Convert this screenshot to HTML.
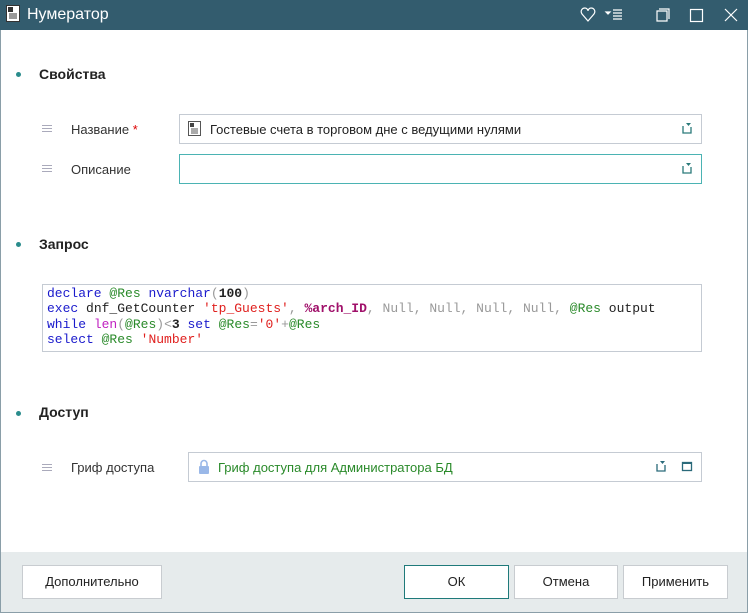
<!DOCTYPE html>
<html><head><meta charset="utf-8"><style>
*{box-sizing:border-box;margin:0;padding:0}
body{width:748px;height:613px;overflow:hidden;background:#fff;font-family:"Liberation Sans",sans-serif;font-size:13px;color:#222;position:relative}
.tb{position:absolute;left:0;top:0;width:748px;height:30px;background:#335c6e;color:#fff}
.win{position:absolute;left:0;top:30px;width:748px;height:583px;border:1px solid #8a9ea8;border-top:none}
.ab{position:absolute}
.sec{position:absolute;left:39px;font-size:14px;font-weight:bold;color:#222}
.dot{position:absolute;left:16px;width:5px;height:5px;border-radius:50%;background:#2a8c8c}
.lbl{position:absolute;left:71px;color:#333}
.hb{position:absolute;left:42px;width:10px;height:7px;border-top:1px solid #aab;border-bottom:1px solid #aab}
.hb:after{content:"";position:absolute;left:0;top:2px;width:10px;border-top:1px solid #aab}
.inp{position:absolute;border:1px solid #c5cbd3;background:#fff}
.code{position:absolute;left:42px;top:284px;width:660px;height:68px;border:1px solid #c5cbd3;font-family:"Liberation Mono",monospace;font-size:13px;line-height:15.3px;padding:1px 0 0 4px;white-space:pre;color:#222}
.k{color:#1a1acc}.v{color:#2a8a2a}.s{color:#e0201e}.g{color:#999}.m{color:#c020c0}.b{font-weight:bold}.p{color:#a0106a;font-weight:bold}
.foot{position:absolute;left:1px;top:552px;width:746px;height:60px;background:#e6ebec}
.btn{position:absolute;top:565px;height:34px;border:1px solid #c8ccd0;background:#fff;text-align:center;line-height:32px;color:#222}
</style></head><body>
<div class="tb">
<svg class="ab" style="left:6px;top:5px" width="14" height="17"><rect x="0.5" y="0.5" width="13" height="16" fill="#fff" stroke="#333"/><rect x="2" y="2" width="5" height="5" fill="#333"/><path d="M3 9h8M3 11h8M3 13h8" stroke="#333"/></svg>
<div class="ab" style="left:27px;top:6px;font-size:16px">Нумератор</div>
<svg class="ab" style="left:580px;top:6px" width="160" height="18" fill="none" stroke="#fff" stroke-width="1.2">
<path d="M8 15 L2 8 C0 5 2 2 5 2 C7 2 8 4 8 5 C8 4 9 2 11 2 C14 2 16 5 14 8 Z"/>
<path d="M26 6h4l-2 2z" fill="#fff"/><path d="M33 4h9M33 7h9M33 10h9M33 13h9"/>
<path d="M79 3h10v10M77 5h10v10h-10z"/>
<rect x="110.5" y="3.5" width="12" height="12"/>
<path d="M145 3l12 12M157 3l-12 12"/></svg>
</div>
<div class="win"></div>
<div class="dot" style="top:72px"></div><div class="sec" style="top:66px">Свойства</div>
<div class="hb" style="top:125px"></div><div class="lbl" style="top:122px">Название <span style="color:#d00">*</span></div>
<div class="inp" style="left:179px;top:114px;width:523px;height:30px"></div>
<svg class="ab" style="left:188px;top:121px" width="13" height="15"><rect x="0.5" y="0.5" width="12" height="14" fill="#fff" stroke="#555"/><rect x="2" y="2" width="4" height="4" fill="#444"/><path d="M3 8h7M3 10h7M3 12h7" stroke="#555"/></svg>
<div class="ab" style="left:210px;top:122px;color:#222">Гостевые счета в торговом дне с ведущими нулями</div>
<svg class="ab" style="left:681px;top:122px" width="12" height="12" fill="none" stroke="#2a7a7a" stroke-width="1.3"><path d="M2 4v7h8V5"/><path d="M5 1h5l-2.5 3z" fill="#2a7a7a" stroke="none"/></svg>
<div class="hb" style="top:165px"></div><div class="lbl" style="top:162px">Описание</div>
<div class="inp" style="left:179px;top:154px;width:523px;height:30px;border-color:#4bb3b3"></div>
<svg class="ab" style="left:681px;top:162px" width="12" height="12" fill="none" stroke="#2a7a7a" stroke-width="1.3"><path d="M2 4v7h8V5"/><path d="M5 1h5l-2.5 3z" fill="#2a7a7a" stroke="none"/></svg>
<div class="dot" style="top:242px"></div><div class="sec" style="top:236px">Запрос</div>
<div class="code"><span class="k">declare</span> <span class="v">@Res</span> <span class="k">nvarchar</span><span class="g">(</span><span class="b">100</span><span class="g">)</span>
<span class="k">exec</span> dnf_GetCounter <span class="s">'tp_Guests'</span><span class="g">,</span> <span class="p">%arch_ID</span><span class="g">, Null, Null, Null, Null,</span> <span class="v">@Res</span> output
<span class="k">while</span> <span class="m">len</span><span class="g">(</span><span class="v">@Res</span><span class="g">)&lt;</span><span class="b">3</span> <span class="k">set</span> <span class="v">@Res</span><span class="g">=</span><span class="s">'0'</span><span class="g">+</span><span class="v">@Res</span>
<span class="k">select</span> <span class="v">@Res</span> <span class="s">'Number'</span></div>
<div class="dot" style="top:411px"></div><div class="sec" style="top:404px">Доступ</div>
<div class="hb" style="top:464px"></div><div class="lbl" style="top:460px">Гриф доступа</div>
<div class="inp" style="left:188px;top:452px;width:514px;height:30px"></div>
<svg class="ab" style="left:198px;top:459px" width="12" height="15"><path d="M3 7V4.5a3 3 0 0 1 6 0V7" fill="none" stroke="#9ab8e8" stroke-width="1.6"/><rect x="1" y="7" width="10" height="8" rx="1" fill="#9ab8e8"/></svg>
<div class="ab" style="left:218px;top:460px;color:#2a8a2a">Гриф доступа для Администратора БД</div>
<svg class="ab" style="left:655px;top:460px" width="40" height="12" fill="none" stroke="#2a6a7a" stroke-width="1.3"><path d="M2 4v7h8V5"/><path d="M5 1h5l-2.5 3z" fill="#2a6a7a" stroke="none"/><rect x="27.5" y="2.5" width="9" height="8"/><path d="M27 3h10" stroke-width="2"/></svg>
<div class="foot"></div>
<div class="btn" style="left:22px;width:140px">Дополнительно</div>
<div class="btn" style="left:404px;width:105px;border-color:#1f7a7a">ОК</div>
<div class="btn" style="left:514px;width:104px">Отмена</div>
<div class="btn" style="left:623px;width:105px">Применить</div>
</body></html>
